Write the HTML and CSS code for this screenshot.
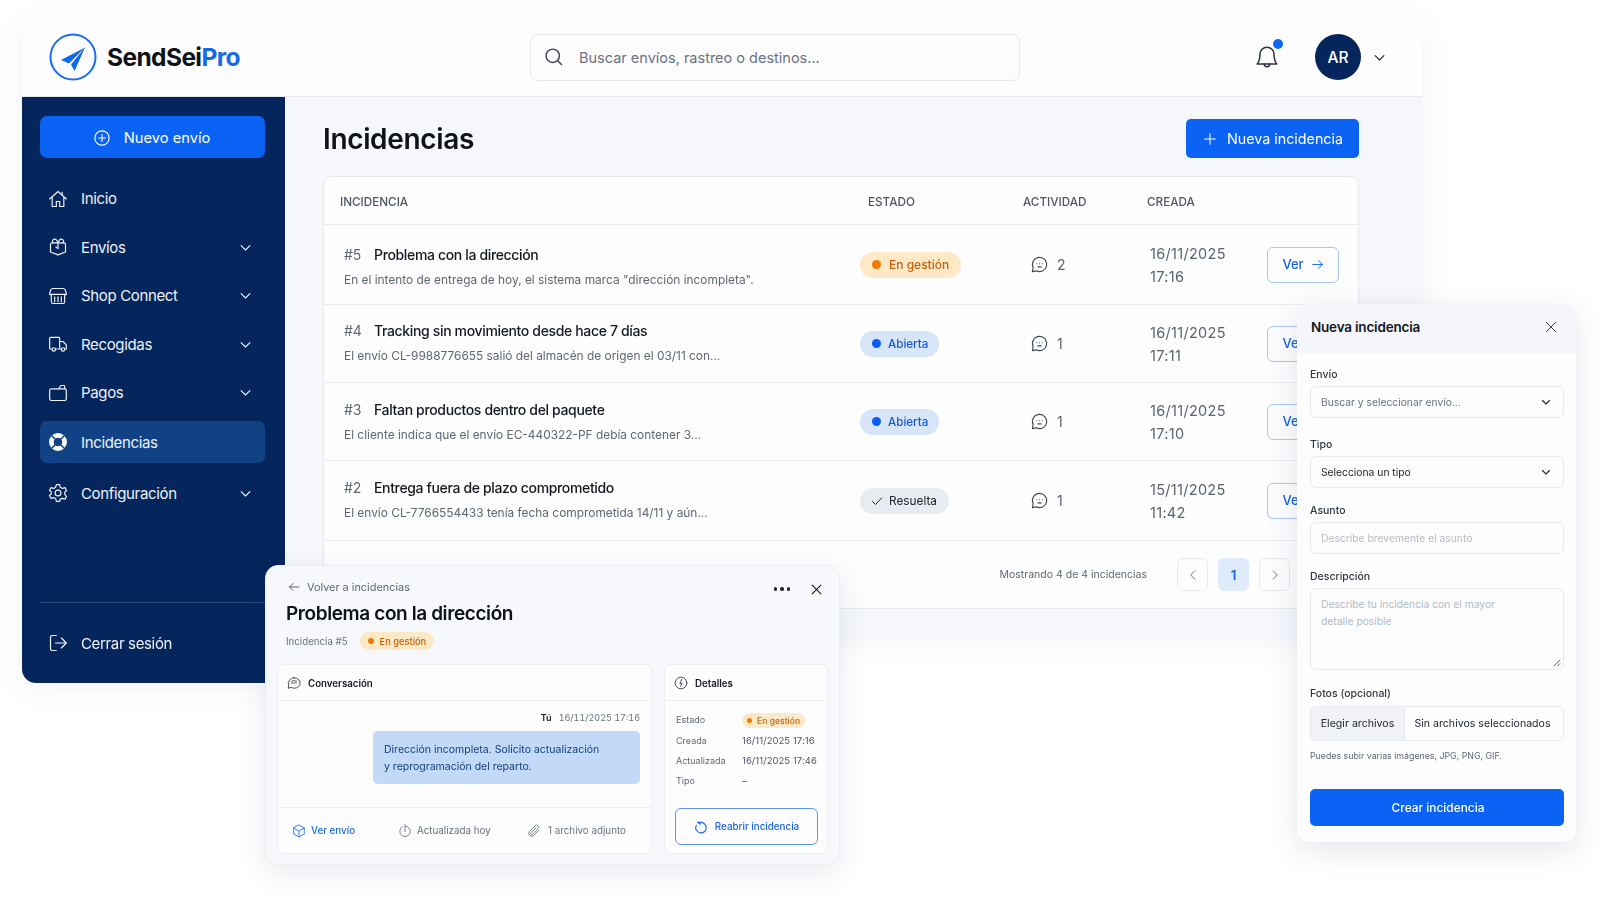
FILE: index.html
```html
<!DOCTYPE html>
<html lang="es">
<head>
<meta charset="utf-8">
<title>SendSeiPro - Incidencias</title>
<link rel="stylesheet" href="styles.css">
</head>
<body>
<svg class="sprite" aria-hidden="true">
  <symbol id="i-chev" viewBox="0 0 24 24"><path d="M5 9l7 7 7-7"/></symbol>
  <symbol id="i-x" viewBox="0 0 24 24"><path d="M4 4l16 16M20 4L4 20"/></symbol>
  <symbol id="i-chat" viewBox="0 0 24 24"><path d="M12 3a9 9 0 0 0-8 13l-1 5 5-1a9 9 0 1 0 4-17z"/><path d="M8.500 11h.01M12 11h.01M15.500 11h.01M10 15h4"/></symbol>
  <symbol id="i-arrow" viewBox="0 0 24 24"><path d="M3 12h18M14 5l7 7-7 7"/></symbol>
</svg>
<div class="page">
  <div class="app">
    <header class="topbar">
      <div class="logo">
        <svg class="logo-mark" viewBox="0 0 48 48"><circle cx="24" cy="24" r="22.500"/><path class="plane" d="M36 14.500 12 27l8 3.500zM36 14.500 22 31.500l3.500 6.500z"/></svg>
        <span class="logo-text">SendSei<span class="logo-pro">Pro</span></span>
      </div>
      <div class="search">
        <svg class="ic search-ic" viewBox="0 0 24 24"><circle cx="10.500" cy="10.500" r="8"/><path d="M16.500 16.500 21 21"/></svg>
        <span>Buscar envíos, rastreo o destinos...</span>
      </div>
      <div class="bell">
        <svg class="ic bell-ic" viewBox="0 0 24 24"><path d="M12 3a6.500 6.500 0 0 0-6.500 6.500c0 5-1 7-2.500 9h18c-1.500-2-2.500-4-2.500-9A6.500 6.500 0 0 0 12 3z"/><path d="M9.500 18.500a2.500 2.500 0 0 0 5 0"/></svg>
        <span class="bell-dot"></span>
      </div>
      <div class="avatar">AR</div>
      <svg class="ic user-chev"><use href="#i-chev"/></svg>
    </header>
    <div class="body">
      <aside class="sidebar">
        <button class="new-btn">
          <svg class="ic" viewBox="0 0 24 24"><circle cx="12" cy="12" r="9.500"/><path d="M12 7.500v9M7.500 12h9"/></svg>
          Nuevo envío
        </button>
        <nav class="nav">
          <a class="nav-item"><svg class="ic" viewBox="0 0 24 24"><path d="M2 12 12 3l10 9M5 10v11h5v-6h4v6h5V10M17 4v3"/></svg><span>Inicio</span></a>
          <a class="nav-item"><svg class="ic" viewBox="0 0 24 24"><path d="M3 9a2 2 0 0 1 2-2h14a2 2 0 0 1 2 2v9l-9 3.500L3 18z"/><path d="M6 7a2.500 2.500 0 0 1 0-3.500c1.500-1.500 3.500-1 4.500.5L12 7l1.500-3c1-1.500 3-2 4.500-.5A2.500 2.500 0 0 1 18 7M12 7v7l-2.500-2"/></svg><span>Envíos</span><svg class="ic chev"><use href="#i-chev"/></svg></a>
          <a class="nav-item"><svg class="ic" viewBox="0 0 24 24"><path d="M6 3h12a3 3 0 0 1 3 2.500l1 4a2.500 2.500 0 0 1-2 1.500v8a2 2 0 0 1-2 2H6a2 2 0 0 1-2-2v-8a2.500 2.500 0 0 1-2-1.500l1-4A3 3 0 0 1 6 3z"/><path d="M2 10h20M8 13v6M12 13v6M16 13v6"/></svg><span>Shop Connect</span><svg class="ic chev"><use href="#i-chev"/></svg></a>
          <a class="nav-item"><svg class="ic" viewBox="0 0 24 24"><path d="M5 18H3a1 1 0 0 1-1-1V5a1 1 0 0 1 1-1h10a1 1 0 0 1 1 1v13H9M14 9h4l4 4v5h-2M14 18h2"/><circle cx="7" cy="18.500" r="2"/><circle cx="18" cy="18.500" r="2"/></svg><span>Recogidas</span><svg class="ic chev"><use href="#i-chev"/></svg></a>
          <a class="nav-item"><svg class="ic" viewBox="0 0 24 24"><path d="M4 7h16a2 2 0 0 1 2 2v10a2 2 0 0 1-2 2H4a2 2 0 0 1-2-2V9a2 2 0 0 1 2-2z"/><path d="M13 7l2-3.500a1 1 0 0 1 1-.5h3a1 1 0 0 1 1 1v3"/></svg><span>Pagos</span><svg class="ic chev"><use href="#i-chev"/></svg></a>
          <a class="nav-item active"><svg class="ic" viewBox="0 0 24 24"><circle class="solid" cx="12" cy="12" r="10"/><circle class="hole" cx="12" cy="12" r="4.500"/><path class="cut" d="M5 5l3.500 3.500M19 5l-3.500 3.500M5 19l3.500-3.500M19 19l-3.500-3.500"/></svg><span>Incidencias</span></a>
          <a class="nav-item after-active"><svg class="ic" viewBox="0 0 24 24"><circle cx="12" cy="12" r="3.500"/><path d="M10 2h4l.7 3 2.600 1.500 3-.9 2 3.400-2.200 2.100v2.800l2.200 2.100-2 3.400-3-.9L14.700 19l-.7 3h-4l-.7-3-2.600-1.500-3 .9-2-3.400 2.200-2.100v-2.800L1.700 9l2-3.400 3 .9L9.300 5z"/></svg><span>Configuración</span><svg class="ic chev"><use href="#i-chev"/></svg></a>
        </nav>
        <div class="side-foot">
          <a class="nav-item"><svg class="ic" viewBox="0 0 24 24"><path d="M10 3H5a2 2 0 0 0-2 2v14a2 2 0 0 0 2 2h5M9 12h13M16 6l6 6-6 6"/></svg><span>Cerrar sesión</span></a>
        </div>
      </aside>
      <main class="main">
        <div class="main-head">
          <h1>Incidencias</h1>
          <button class="primary-btn"><svg class="ic" viewBox="0 0 24 24"><path d="M12 3v18M3 12h18"/></svg>Nueva incidencia</button>
        </div>
        <section class="table">
          <div class="row head">
            <div class="h1">INCIDENCIA</div><div class="h2">ESTADO</div><div>ACTIVIDAD</div><div>CREADA</div>
          </div>
          <div class="row item tall">
            <div class="c-main down"><div class="t-line"><span class="num">#5</span><b>Problema con la dirección</b></div><p>En el intento de entrega de hoy, el sistema marca "dirección incompleta".</p></div>
            <div><span class="pill warn"><i></i>En gestión</span></div>
            <div class="act"><svg class="ic"><use href="#i-chat"/></svg>2</div>
            <div class="date"><span>16/11/2025<br>17:16</span><a class="ver">Ver<svg class="ic"><use href="#i-arrow"/></svg></a></div>
          </div>
          <div class="row item">
            <div class="c-main up"><div class="t-line"><span class="num">#4</span><b>Tracking sin movimiento desde hace 7 días</b></div><p>El envío CL-9988776655 salió del almacén de origen el 03/11 con...</p></div>
            <div><span class="pill open"><i></i>Abierta</span></div>
            <div class="act"><svg class="ic"><use href="#i-chat"/></svg>1</div>
            <div class="date"><span>16/11/2025<br>17:11</span><a class="ver">Ver<svg class="ic"><use href="#i-arrow"/></svg></a></div>
          </div>
          <div class="row item">
            <div class="c-main"><div class="t-line"><span class="num">#3</span><b>Faltan productos dentro del paquete</b></div><p>El cliente indica que el envío EC-440322-PF debía contener 3...</p></div>
            <div><span class="pill open"><i></i>Abierta</span></div>
            <div class="act"><svg class="ic"><use href="#i-chat"/></svg>1</div>
            <div class="date"><span>16/11/2025<br>17:10</span><a class="ver">Ver<svg class="ic"><use href="#i-arrow"/></svg></a></div>
          </div>
          <div class="row item tall">
            <div class="c-main up"><div class="t-line"><span class="num">#2</span><b>Entrega fuera de plazo comprometido</b></div><p>El envío CL-7766554433 tenía fecha comprometida 14/11 y aún...</p></div>
            <div><span class="pill done"><svg class="ic" viewBox="0 0 24 24"><path d="M3 13l6 6L21 6"/></svg>Resuelta</span></div>
            <div class="act"><svg class="ic"><use href="#i-chat"/></svg>1</div>
            <div class="date"><span>15/11/2025<br>11:42</span><a class="ver">Ver<svg class="ic"><use href="#i-arrow"/></svg></a></div>
          </div>
          <div class="pager">
            <span class="pager-text">Mostrando 4 de 4 incidencias</span>
            <span class="pg"><svg class="ic" viewBox="0 0 24 24"><path d="M15 5l-7 7 7 7"/></svg></span>
            <span class="pg cur">1</span>
            <span class="pg"><svg class="ic" viewBox="0 0 24 24"><path d="M9 5l7 7-7 7"/></svg></span>
          </div>
        </section>
      </main>
    </div>
  </div>

  <section class="detail">
    <div class="d-top">
      <div class="back"><svg class="ic" viewBox="0 0 24 24"><path d="M22 12H3M10 5l-7 7 7 7"/></svg>Volver a incidencias</div>
      <div class="dots"><i></i><i></i><i></i></div>
      <svg class="ic d-close"><use href="#i-x"/></svg>
    </div>
    <h2>Problema con la dirección</h2>
    <div class="d-meta"><span>Incidencia #5</span><span class="pill warn small"><i></i>En gestión</span></div>
    <div class="d-cards">
      <div class="d-card conv">
        <div class="d-head"><svg class="ic" viewBox="0 0 24 24"><path d="M12 3a10 9 0 0 0-9 12.500L2 21l5-1.500A10 9 0 1 0 12 3z"/><path d="M7 9.500c3-2 7-2 10 0M8 13l2-2 2 2 2-2 2 2"/></svg>Conversación</div>
        <div class="d-msgs">
          <div class="who"><b>Tú</b><span>16/11/2025 17:16</span></div>
          <div class="bubble">Dirección incompleta. Solicito actualización<br>y reprogramación del reparto.</div>
        </div>
        <div class="d-foot">
          <span class="f-link"><svg class="ic" viewBox="0 0 24 24"><path d="M12 2l9 4.500v11L12 22l-9-4.500v-11zM3 7l9 5 9-5M12 12v10"/></svg>Ver envío</span>
          <span class="f-time"><svg class="ic" viewBox="0 0 24 24"><path d="M7 5a9 9 0 1 0 5-1.500M12 1v5M12 8v5"/></svg>Actualizada hoy</span>
          <span class="f-clip"><svg class="ic" viewBox="0 0 24 24"><path d="M20 11l-9 9a5 5 0 0 1-7-7l10-10a3.500 3.500 0 0 1 5 5l-10 10a1.800 1.800 0 0 1-2.500-2.500L15 7"/></svg>1 archivo adjunto</span>
        </div>
      </div>
      <div class="d-card info">
        <div class="d-head"><svg class="ic" viewBox="0 0 24 24"><circle cx="12" cy="12" r="10"/><path d="M13 6l-3 7h4l-3 5"/></svg>Detalles</div>
        <dl class="d-list">
          <dt>Estado</dt><dd><span class="pill warn mini"><i></i>En gestión</span></dd>
          <dt>Creada</dt><dd>16/11/2025 17:16</dd>
          <dt>Actualizada</dt><dd>16/11/2025 17:46</dd>
          <dt>Tipo</dt><dd>–</dd>
        </dl>
        <button class="reopen"><svg class="ic" viewBox="0 0 24 24"><path d="M9.500 4.500A9 9 0 1 1 4 9"/><path d="M4 3h7v6z" class="fillic"/></svg>Reabrir incidencia</button>
      </div>
    </div>
  </section>

  <section class="form">
    <div class="f-head"><span>Nueva incidencia</span><svg class="ic"><use href="#i-x"/></svg></div>
    <div class="f-body">
      <label>Envío</label>
      <div class="field muted"><span>Buscar y seleccionar envío...</span><svg class="ic"><use href="#i-chev"/></svg></div>
      <label class="l2">Tipo</label>
      <div class="field"><span>Selecciona un tipo</span><svg class="ic"><use href="#i-chev"/></svg></div>
      <label class="l3">Asunto</label>
      <div class="field ph"><span>Describe brevemente el asunto</span></div>
      <label class="l3">Descripción</label>
      <div class="field area ph"><span>Describe tu incidencia con el mayor<br>detalle posible</span>
        <svg class="grip" viewBox="0 0 10 10"><path d="M9 2 2 9M9 6 6 9"/></svg>
      </div>
      <label class="l4">Fotos (opcional)</label>
      <div class="file"><span class="file-btn">Elegir archivos</span><span class="file-name">Sin archivos seleccionados</span></div>
      <p class="help">Puedes subir varias imágenes, JPG, PNG, GIF.</p>
      <button class="create">Crear incidencia</button>
    </div>
  </section>
</div>
</body>
</html>
```

FILE: styles.css
```css
* { box-sizing: border-box; }
html, body { margin: 0; padding: 0; background: #fff; }
body { font-family: Inter, "Liberation Sans", sans-serif; color: #14181f; overflow: hidden; }
.sprite { position: absolute; width: 0; height: 0; }
.page { position: relative; width: 1600px; height: 900px; padding: 20px 178px 0 22px; }
button { font-family: inherit; border: 0; cursor: pointer; }
.ic { fill: none; stroke: currentColor; stroke-width: 1.7; stroke-linecap: round; stroke-linejoin: round; flex: none; }

.app { filter: drop-shadow(0 4px 14px rgba(30, 50, 90, .06)); }

/* top bar */
.topbar { height: 77px; display: flex; align-items: center; padding: 0 35px 2px 27px; background: #fdfdfe; border-bottom: 1px solid #e6e9ee; border-radius: 14px 14px 0 0; }
.logo { display: flex; align-items: center; gap: 10px; width: 191px; flex: none; }
.logo-mark { width: 48px; height: 48px; flex: none; fill: none; stroke: #1a6cf0; stroke-width: 2; }
.plane { fill: #0f66f0; stroke: none; }
.logo-text { font-size: 24.500px; font-weight: 700; letter-spacing: -.6px; color: #0f1218; }
.logo-pro { color: #1469ee; }
.search { margin-left: 290px; width: 490px; height: 47px; flex: none; display: flex; align-items: center; gap: 15px; padding: 0 13px; background: #fcfcfd; border: 1.500px solid #e6e8ec; border-radius: 7px; font-size: 14.500px; color: #6a7280; }
.search-ic { width: 20px; height: 20px; color: #3c4352; }
.bell { position: relative; width: 26px; height: 26px; margin-left: auto; margin-right: 35px; }
.bell-ic { width: 26px; height: 26px; color: #2a3140; stroke-width: 1.400; }
.bell-dot { position: absolute; top: -5px; right: -3px; width: 10px; height: 10px; border-radius: 50%; background: #0f66f0; }
.avatar { width: 46px; height: 46px; border-radius: 50%; flex: none; background: #05265c; color: #fff; font-size: 15.500px; font-weight: 500; display: flex; align-items: center; justify-content: center; }
.user-chev { width: 15px; height: 15px; margin-left: 11px; color: #20262f; }

.body { display: flex; align-items: flex-start; }

/* sidebar */
.sidebar { width: 263px; height: 586px; flex: none; background: #05265c; border-radius: 0 0 0 14px; padding: 19px 20px 0 18px; display: flex; flex-direction: column; color: #eef2f9; }
.new-btn { height: 42px; flex: none; background: #0b63f6; color: #fff; border-radius: 7px; font-size: 14.700px; display: flex; align-items: center; justify-content: center; gap: 13px; padding: 1px 2px 0 0; }
.new-btn .ic { width: 18px; height: 18px; stroke-width: 1.500; }
.nav { margin-top: 19.500px; display: flex; flex-direction: column; gap: 6.600px; }
.nav-item { height: 42px; flex: none; display: flex; align-items: center; gap: 13px; padding: 0 12px 0 8px; border-radius: 7px; font-size: 15px; letter-spacing: -.35px; color: #eef2f9; }
.nav-item > .ic:first-child { width: 20px; height: 20px; stroke-width: 1.400; }
.nav-item span { flex: 1; }
.chev { width: 15px; height: 15px; stroke-width: 1.800; }
.active { background: #114285; margin: 1px 0; }
.after-active { margin-top: 1px; }
.solid { fill: #fff; stroke: #fff; }
.hole { fill: #114285; stroke: #114285; }
.cut { stroke: #114285; stroke-width: 1.800; }
.side-foot { margin-top: auto; border-top: 1px solid #2a4a7c; padding: 19px 0 19px; }

/* main */
.main { flex: 1; height: 542px; background: #f5f7fb; padding: 22px 63px 0 38px; }
.main-head { display: flex; align-items: center; justify-content: space-between; height: 39px; }
h1 { margin: 0; font-size: 28px; font-weight: 600; letter-spacing: -.35px; color: #0f1218; }
.primary-btn { width: 173px; height: 39px; background: #0b63f6; color: #fff; border-radius: 5px; font-size: 14.300px; white-space: nowrap; display: flex; align-items: center; gap: 10px; padding: 0 14px 0 17px; }
.primary-btn .ic { width: 14px; height: 14px; }

.table { margin-top: 18px; height: 433px; background: #fdfdfe; border: 1px solid #e5e8ed; border-radius: 8px; display: flex; flex-direction: column; }
.row { display: grid; grid-template-columns: 536px 163px 124px 1fr; align-items: center; border-bottom: 1px solid #e8ebef; }
.row.head { height: 48px; padding-top: 2px; font-size: 11.700px; font-weight: 500; color: #4e5665; }
.row.head .h1 { padding-left: 16px; }
.row.head .h2 { padding-left: 8px; }
.item { height: 78px; }
.tall { height: 80px; }
.c-main { padding-left: 20px; }
.c-main.down { padding-top: 3px; }
.c-main.up { padding-bottom: 3px; }
.t-line { display: flex; gap: 12px; font-size: 14px; }
.t-line b { font-weight: 500; color: #14181f; letter-spacing: -.35px; }
.num { color: #5f6774; width: 18px; }
.c-main p { margin: 9px 0 0; font-size: 11.900px; color: #5f6774; }
.pill { display: inline-flex; align-items: center; height: 26px; padding: 0 12px; gap: 8px; border-radius: 13px; font-size: 12px; font-weight: 500; }
.pill i { width: 9px; height: 9px; border-radius: 50%; flex: none; background: currentColor; }
.warn { background: #fde9c6; color: #c2620f; }
.warn i { background: #ef7a0c; }
.open { background: #d7e5f9; color: #1659d6; font-size: 11.600px; gap: 7px; padding-right: 11px; }
.open i { background: #0b5cf0; }
.done { background: #e8ebf0; color: #20262f; font-weight: 400; font-size: 11.800px; gap: 6px; padding-right: 12px; padding-left: 11px; }
.done .ic { width: 12px; height: 12px; stroke-width: 2; }
.act { display: flex; align-items: center; gap: 8px; padding-left: 7px; font-size: 14px; color: #5b6370; }
.act .ic { width: 19px; height: 19px; stroke-width: 1.400; color: #3f4653; }
.date { display: flex; align-items: center; justify-content: space-between; padding: 0 19px 0 3px; font-size: 14.500px; line-height: 22.500px; letter-spacing: .3px; color: #5b6370; }
.date > span { padding-top: 2px; }
.ver { width: 72px; height: 36px; display: flex; align-items: center; justify-content: center; gap: 7px; border: 1.500px solid #a9c6f2; border-radius: 6px; background: #fdfdfe; color: #1764e4; font-size: 13px; font-weight: 500; letter-spacing: 0; }
.ver .ic { width: 13px; height: 13px; }
.pager { flex: 1; display: flex; align-items: center; padding: 0 68px 0 0; justify-content: flex-end; gap: 10px; font-size: 10.500px; color: #5f6774; }
.pager-text { margin-right: 20px; }
.pg { width: 31px; height: 33px; border: 1px solid #e6e9ee; border-radius: 6px; display: flex; align-items: center; justify-content: center; color: #6a7280; background: #fdfdfe; }
.pg .ic { width: 14px; height: 14px; }
.cur { background: #dfeafa; border-color: #dfeafa; color: #1764e4; font-size: 13px; font-weight: 600; }

/* detail panel */
.detail { position: absolute; left: 265px; top: 565px; width: 575px; height: 300px; background: #f6f8fb; border: 1px solid #eceef2; border-radius: 13px; box-shadow: 0 8px 28px rgba(30, 50, 90, .10); padding: 0 11px; }
.d-top { display: flex; align-items: center; height: 42px; padding: 0 5px 0 11px; }
.back { display: flex; align-items: center; gap: 7px; font-size: 10.900px; color: #5f6774; flex: 1; }
.back .ic { width: 12px; height: 12px; color: #3f4653; }
.dots { display: flex; gap: 3px; margin: 4px 20px 0 0; }
.dots i { width: 3.500px; height: 3.500px; border-radius: 50%; background: #20262f; }
.d-close { width: 13px; height: 13px; margin-top: 4px; color: #14181f; stroke-width: 2; }
h2 { margin: -6px 0 0 9px; font-size: 19px; line-height: 24px; font-weight: 600; letter-spacing: -.4px; color: #0f1218; }
.d-meta { display: flex; align-items: center; gap: 12px; margin: 6px 0 0 9px; height: 18px; font-size: 9.700px; color: #6a7280; }
.pill.small { height: 18px; gap: 6px; padding: 0 8px; font-size: 9.300px; border-radius: 9px; }
.pill.small i { width: 6px; height: 6px; }
.pill.mini { height: 15px; gap: 5px; padding: 0 5px; font-size: 8.500px; border-radius: 8px; }
.pill.mini i { width: 5px; height: 5px; }
.d-cards { display: flex; gap: 12px; margin-top: 14px; height: 190px; }
.d-card { background: #fdfdfe; border: 1px solid #eceef2; border-radius: 6px; display: flex; flex-direction: column; }
.conv { width: 375px; }
.info { width: 164px; }
.d-head { height: 36px; flex: none; border-bottom: 1px solid #eceef2; display: flex; align-items: center; gap: 7px; padding: 1px 0 0 9px; font-size: 9.700px; font-weight: 600; color: #14181f; }
.d-head .ic { width: 14px; height: 14px; stroke-width: 1.600; color: #3f4653; }
.d-msgs { flex: 1; padding: 11px 11px 0 95px; }
.who { display: flex; justify-content: flex-end; gap: 7px; font-size: 9px; font-variant-numeric: tabular-nums; color: #6a7280; }
.who b { color: #14181f; font-weight: 600; }
.bubble { margin-top: 8px; height: 53px; background: #c3d9f8; border-radius: 5px; padding: 10px 11px; font-size: 10.500px; line-height: 17px; color: #143e78; }
.d-foot { height: 46px; flex: none; border-top: 1px solid #eceef2; display: flex; align-items: center; padding-left: 14px; font-size: 9.800px; color: #6a7280; }
.d-foot span { display: flex; align-items: center; gap: 5px; }
.d-foot .ic { width: 14px; height: 14px; stroke-width: 1.500; }
.f-link { color: #1f6fe0; width: 106px; font-weight: 500; }
.f-time { width: 129px; }
.f-clip.f-clip { gap: 7px; }
.d-list { margin: 0; padding: 12px 10px 0 11px; display: grid; grid-template-columns: 66px 1fr; row-gap: 6px; font-size: 9px; line-height: 14px; color: #5f6774; }
.d-list dd { margin: 0; font-size: 9.500px; letter-spacing: .05px; white-space: nowrap; color: #4e5665; }
.reopen { margin: auto 0 8px 10px; width: 143px; height: 37px; flex: none; background: #fdfdfe; border: 1.500px solid #5c96ee; border-radius: 6px; color: #1c66e0; font-size: 9.800px; font-weight: 500; display: flex; align-items: center; justify-content: center; gap: 7px; }
.reopen .ic { width: 14px; height: 14px; stroke-width: 2; }
.fillic { fill: currentColor; stroke: none; }

/* form panel */
.form { position: absolute; left: 1297px; top: 304px; width: 279px; height: 538px; background: #fdfdfe; border-radius: 12px; box-shadow: 0 8px 30px rgba(30, 50, 90, .12); overflow: hidden; }
.f-head { height: 49px; background: #f4f6fa; display: flex; align-items: center; justify-content: space-between; padding: 0 18px 4px 14px; font-size: 13.500px; letter-spacing: -.2px; font-weight: 600; color: #14181f; }
.f-head .ic { width: 14px; height: 14px; stroke-width: 1.500; color: #20262f; }
.f-body { padding: 14px 12px 0 13px; display: flex; flex-direction: column; }
.f-body label { height: 16px; font-size: 10.500px; line-height: 16px; font-weight: 500; color: #2f3642; margin-bottom: 3px; }
.f-body .l2 { margin-top: 18.500px; margin-bottom: 3.500px; }
.f-body .l3 { margin-top: 14.500px; margin-bottom: 3.500px; }
.f-body .l4 { margin-top: 15.500px; margin-bottom: 4.500px; }
.field { height: 32px; flex: none; display: flex; align-items: center; justify-content: space-between; padding: 0 11px 0 10px; border: 1px solid #e6e9ee; border-radius: 6px; background: #fdfdfe; font-size: 10.300px; color: #20262f; }
.field .ic { width: 12px; height: 12px; stroke-width: 2.200; color: #20262f; }
.muted { color: #6a7280; }
.ph { color: #b4bac4; }
.area { position: relative; height: 82px; align-items: flex-start; padding-top: 7px; line-height: 17px; }
.grip { position: absolute; right: 2px; bottom: 2px; width: 9px; height: 9px; fill: none; stroke: #4e5665; stroke-width: 1; }
.file { height: 35px; flex: none; display: flex; border: 1px solid #e6e9ee; border-radius: 6px; overflow: hidden; font-size: 10.600px; color: #20262f; }
.file-btn { width: 94px; background: #f0f2f6; border-right: 1px solid #e6e9ee; display: flex; align-items: center; justify-content: center; }
.file-name { flex: 1; display: flex; align-items: center; justify-content: center; padding-right: 3px; }
.help { margin: 9px 0 0; font-size: 8.800px; line-height: 12px; color: #5f6774; }
.create { margin-top: 27px; height: 37px; flex: none; background: #0b63f6; color: #fff; border-radius: 5px; font-size: 11.900px; font-weight: 500; padding-left: 8px; }
```
